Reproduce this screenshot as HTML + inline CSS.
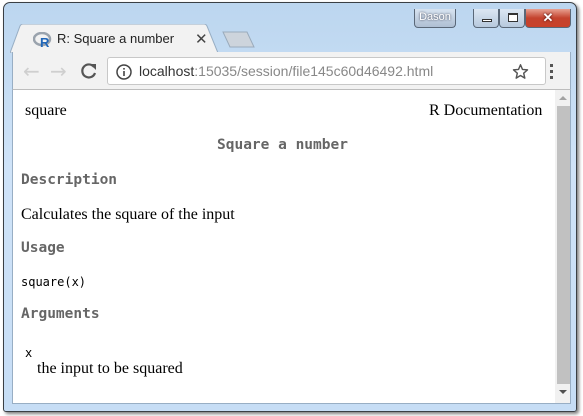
<!DOCTYPE html>
<html><head><meta charset="utf-8"><style>
*{margin:0;padding:0;box-sizing:border-box}
html,body{width:583px;height:416px;overflow:hidden;background:#fff}
.win{position:absolute;left:3px;top:2px;width:574px;height:410px;border:1px solid #3a3f44;border-radius:7px 7px 3px 3px;background:linear-gradient(#bcd6ef,#cfe3f8 40%,#c6ddf5);box-shadow:2px 2px 3px rgba(0,0,0,.5)}
.btn{position:absolute;top:6px;height:19px;border:1px solid #5a6878;border-top:none;border-radius:0 0 4px 4px}
.ph{position:absolute;left:221px;top:30px}
.toolbar{position:absolute;left:12px;top:52px;width:559px;height:38px;background:#f2f2f2;border-left:1px solid #98aec4;border-right:1px solid #98aec4}
.omni{position:absolute;left:94px;top:5px;width:439px;height:28px;background:#fff;border:1px solid #c8c8c8;border-radius:3px;font:14px "Liberation Sans",sans-serif;color:#333}
.content{position:absolute;left:12px;top:89px;width:559px;height:315px;background:#fff;border:1px solid #98aec4;border-top:1px solid #bdbdbd;overflow:hidden}
.serif{font-family:"Liberation Serif",serif;font-size:16px;color:#000;position:absolute}
.mono{font-family:"DejaVu Sans Mono","Liberation Mono",monospace;position:absolute;color:#666;font-weight:bold;font-size:14.5px}
.code{font-family:"DejaVu Sans Mono","Liberation Mono",monospace;position:absolute;font-size:12px;color:#000}
</style></head><body>
<div class="win">
  <div class="btn" style="left:410px;width:42px;background:linear-gradient(#d7e3f0,#aebfd3);font:11px 'Liberation Sans',sans-serif;color:#fff;text-align:center;line-height:17px;text-shadow:0 0 2px #334">Dason</div>
  <div class="btn" style="left:469px;width:26px;background:linear-gradient(#dce7f3,#b7c9dd)"><div style="position:absolute;left:8px;top:10px;width:10px;height:3px;border:1px solid #333;background:#fff"></div></div>
  <div class="btn" style="left:495px;width:26px;background:linear-gradient(#dce7f3,#b7c9dd)"><div style="position:absolute;left:8px;top:4px;width:10px;height:9px;border:1px solid #333;border-top-width:2px;background:#fff"></div></div>
  <div class="btn" style="left:521px;width:46px;background:linear-gradient(#e8a191,#c4432e 50%,#c9412a);color:#fff;text-align:center;font:bold 13px 'Liberation Sans',sans-serif;line-height:17px;text-shadow:0 0 2px #300">✕</div>
</div>
<svg width="208" height="29" viewBox="0 0 208 29" style="position:absolute;left:10px;top:24px"><path d="M0 29 L10 2 Q11 0 13 0 L194 0 Q196 0 197 2 L208 29 Z" fill="#f2f2f2" stroke="#98aec4"/></svg>
<svg style="position:absolute;left:33px;top:32px" width="20" height="16" viewBox="0 0 20 16"><ellipse cx="9" cy="7" rx="8" ry="6" fill="none" stroke="#9aa3ad" stroke-width="2.5"/><text x="7" y="15" font-family="Liberation Sans" font-weight="bold" font-size="13" fill="#2066b8">R</text></svg>
<div style="position:absolute;left:57px;top:31px;font:13px 'Liberation Sans',sans-serif;color:#222">R: Square a number</div>
<div style="position:absolute;left:195px;top:30px;font:15px 'Liberation Sans',sans-serif;color:#444">✕</div>
<svg class="ph" width="36" height="20" viewBox="0 0 36 20"><path d="M2 2 L26 2 L33 17 L9 17 Z" fill="#cdd4dc" stroke="#9aabbc"/></svg>
<div class="toolbar">
  <div style="position:absolute;left:10px;top:7px;font:20px 'DejaVu Sans',sans-serif;color:#cfcfcf">←</div>
  <div style="position:absolute;left:37px;top:7px;font:20px 'DejaVu Sans',sans-serif;color:#cfcfcf">→</div>
  <svg style="position:absolute;left:67px;top:10px" width="18" height="18" viewBox="0 0 18 18"><path d="M14 5 A6.5 6.5 0 1 0 15 11" fill="none" stroke="#555" stroke-width="2.2"/><path d="M10 2 L16 2 L16 8 Z" fill="#555"/></svg>
  <div class="omni">
    <svg style="position:absolute;left:8px;top:6px" width="16" height="16" viewBox="0 0 16 16"><circle cx="8" cy="8" r="7" fill="none" stroke="#444" stroke-width="1.5"/><rect x="7.2" y="7" width="1.6" height="5" fill="#444"/><rect x="7.2" y="4" width="1.6" height="1.6" fill="#444"/></svg>
    <span style="position:absolute;left:31px;top:5px">localhost<span style="color:#888">:15035/session/file145c60d46492.html</span></span>
    <svg style="position:absolute;left:404px;top:5px" width="17" height="17" viewBox="0 0 24 24"><path d="M12 2.5l2.8 6.6 7.1.6-5.4 4.7 1.6 7-6.1-3.7-6.1 3.7 1.6-7-5.4-4.7 7.1-.6z" fill="none" stroke="#555" stroke-width="2" stroke-linejoin="round"/></svg>
  </div>
  <div style="position:absolute;left:537px;top:12px;width:3px">
    <div style="width:3px;height:3px;background:#555;margin-bottom:3px"></div><div style="width:3px;height:3px;background:#555;margin-bottom:3px"></div><div style="width:3px;height:3px;background:#555"></div></div>
</div>
<div class="content">
  <div class="serif" style="left:12px;top:12px">square</div>
  <div class="serif" style="left:416px;top:12px">R Documentation</div>
  <div class="mono" style="left:204px;top:47px">Square a number</div>
  <div class="mono" style="left:8px;top:82px">Description</div>
  <div class="serif" style="left:8px;top:116px">Calculates the square of the input</div>
  <div class="mono" style="left:8px;top:150px">Usage</div>
  <div class="code" style="left:8px;top:185px">square(x)</div>
  <div class="mono" style="left:8px;top:216px">Arguments</div>
  <div class="code" style="left:12px;top:256px">x</div>
  <div class="serif" style="left:24px;top:270px">the input to be squared</div>
  <div style="position:absolute;left:542px;top:0;width:16px;height:314px;background:#f1f1f1">
    <div style="position:absolute;left:4px;top:6px;border:4px solid transparent;border-bottom:4px solid #a3a3a3;border-top:none"></div>
    <div style="position:absolute;left:2px;top:16px;width:13px;height:278px;background:#c1c1c1"></div>
    <div style="position:absolute;left:4px;top:300px;border:4px solid transparent;border-top:4px solid #505050;border-bottom:none"></div>
  </div>
</div>
</body></html>
